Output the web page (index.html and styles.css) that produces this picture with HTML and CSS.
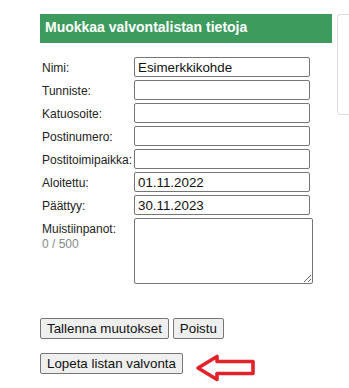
FILE: index.html
```html
<!DOCTYPE html>
<html lang="fi">
<head>
<meta charset="utf-8">
<title>Muokkaa valvontalistan tietoja</title>
<link rel="stylesheet" href="styles.css">
</head>
<body>
<div class="page">
  <div class="main">
    <div class="title">Muokkaa valvontalistan tietoja</div>
    <form class="form">
      <label class="lbl" for="nimi">Nimi:</label>
      <input class="inp" id="nimi" type="text" value="Esimerkkikohde">
      <label class="lbl" for="tunniste">Tunniste:</label>
      <input class="inp" id="tunniste" type="text">
      <label class="lbl" for="katu">Katuosoite:</label>
      <input class="inp" id="katu" type="text">
      <label class="lbl" for="postinro">Postinumero:</label>
      <input class="inp" id="postinro" type="text">
      <label class="lbl" for="postitp">Postitoimipaikka:</label>
      <input class="inp" id="postitp" type="text">
      <label class="lbl" for="alku">Aloitettu:</label>
      <input class="inp" id="alku" type="text" value="01.11.2022">
      <label class="lbl" for="loppu">Päättyy:</label>
      <input class="inp" id="loppu" type="text" value="30.11.2023">
      <label class="lbl lbl-notes" for="notes">Muistiinpanot:<br><span class="count">0 / 500</span></label>
      <textarea class="notes" id="notes"></textarea>
    </form>
    <div class="btnrow first">
      <button class="btn" type="button">Tallenna muutokset</button>
      <button class="btn" type="button">Poistu</button>
    </div>
    <div class="btnrow second">
      <button class="btn" type="button">Lopeta listan valvonta</button>
      <svg class="arrow" width="62" height="28" viewBox="0 0 62 28" aria-hidden="true">
        <polygon points="3,14 22,2.5 22,7.5 58,7.5 58,19.5 22,19.5 22,25.5" fill="#ffffff" stroke="#e2232a" stroke-width="3.6" stroke-linejoin="round"/>
      </svg>
    </div>
  </div>
  <div class="side"></div>
</div>
</body>
</html>
```
FILE: styles.css
```css
html, body {
  margin: 0;
  padding: 0;
  overflow: hidden;
  background: #ffffff;
}

body {
  font-family: "Liberation Sans", Arial, sans-serif;
  color: #222222;
}

.page {
  display: flex;
  align-items: flex-start;
  gap: 5px;
  padding: 14px 0 0 40px;
}

.main {
  width: 292px;
  flex-shrink: 0;
}

.side {
  width: 12px;
  height: 101px;
  flex-shrink: 0;
  box-sizing: border-box;
  border: 1px solid #dedede;
  border-right: none;
  border-radius: 4px 0 0 4px;
}

.title {
  background: #3d9b5e;
  color: #ffffff;
  font-weight: bold;
  font-size: 14px;
  line-height: 20px;
  padding: 3px 5px 6px;
}

.form {
  display: grid;
  grid-template-columns: 94px auto;
  row-gap: 3px;
  align-items: baseline;
  margin: 14px 0 0;
}

.lbl {
  font-size: 12px;
  line-height: 14px;
  padding-left: 2px;
  white-space: nowrap;
}

.lbl-notes {
  line-height: 15px;
}

.count {
  color: #888888;
}

.inp {
  box-sizing: border-box;
  width: 176px;
  height: 20px;
  margin: 0;
  padding: 1px 3px;
  border: 1px solid #767676;
  border-radius: 2px;
  font-family: "Liberation Sans", Arial, sans-serif;
  font-size: 13.33px;
  color: #111111;
}

.notes {
  box-sizing: border-box;
  width: 179px;
  height: 66px;
  margin: 0;
  padding: 2px;
  border: 1px solid #767676;
  border-radius: 2px;
  font-family: "Liberation Sans", Arial, sans-serif;
  font-size: 13.33px;
}

.btnrow {
  display: flex;
  align-items: flex-start;
  gap: 4px;
}

.btnrow.first {
  margin-top: 34px;
}

.btnrow.second {
  margin-top: 14px;
}

.btn {
  box-sizing: border-box;
  height: 21px;
  margin: 0;
  padding: 1px 6px;
  border: 1px solid #767676;
  border-radius: 2px;
  background: #efefef;
  color: #111111;
  font-family: "Liberation Sans", Arial, sans-serif;
  font-size: 13.33px;
}

.arrow {
  display: block;
  margin-left: 8px;
  margin-top: 1px;
}
```
